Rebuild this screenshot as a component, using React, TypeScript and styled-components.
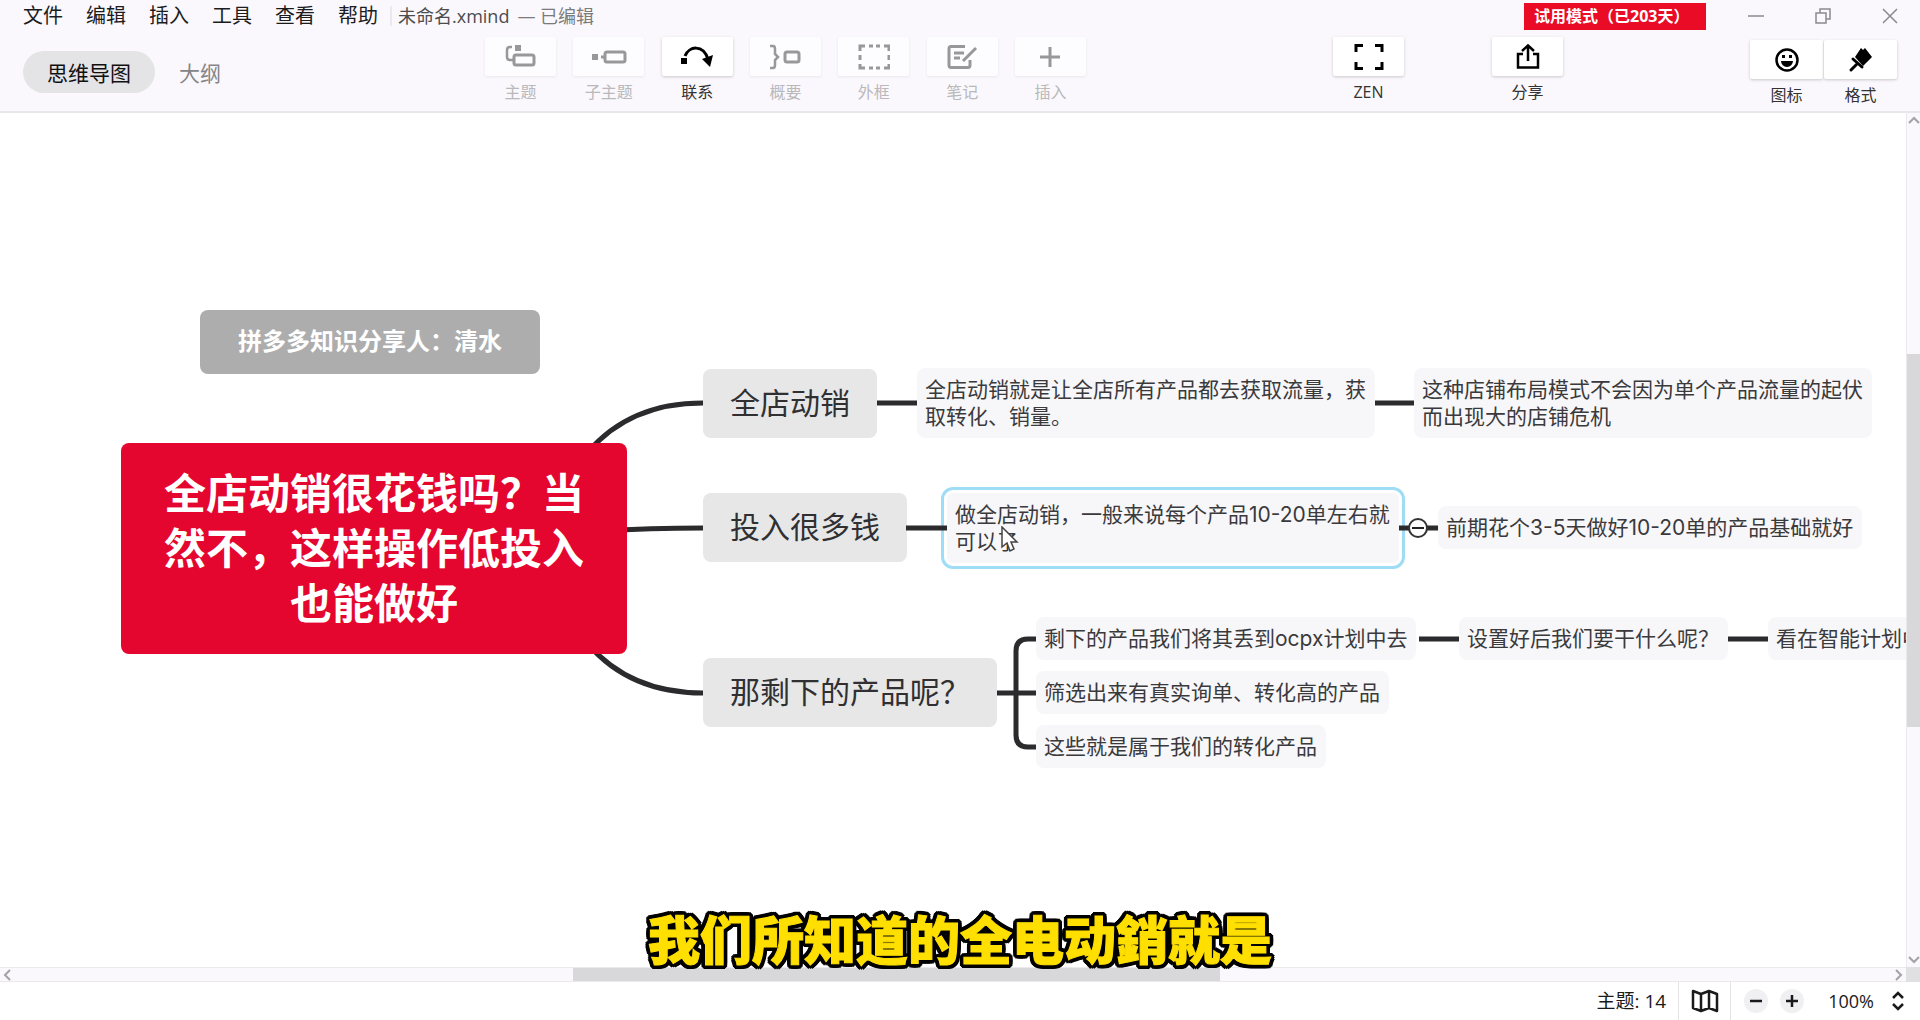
import React from "react";
import styled, { createGlobalStyle } from "styled-components";

const ui = `"Open Sans", "Noto Sans CJK SC", sans-serif`;
const mapFont = `Inter, "Noto Sans CJK SC", sans-serif`;

const GlobalStyle = createGlobalStyle`
  * { box-sizing: border-box; }
  body { margin: 0; background: #fff; font-family: ${ui}; color: #222; overflow: hidden; }
  button { font: inherit; color: inherit; border: 0; padding: 0; background: none; cursor: pointer; }
`;

const Window = styled.div`
  position: relative;
  height: 100vh;
  display: grid;
  grid-template-rows: auto 1fr auto;
`;

const Header = styled.header`
  background: #faf8fc;
  border-bottom: 2px solid #e8e6ea;
  height: 113px;
  display: grid;
  grid-template-rows: 32px 1fr;
`;

const TitleBar = styled.div`
  display: flex;
  align-items: center;
  padding: 0 22px 0 23px;
`;

const Menu = styled.nav`
  display: flex;
  gap: 23px;
  padding-right: 12px;
`;

const MenuItem = styled.button`
  font-size: 20px;
  line-height: 32px;
  color: #1c1c1e;
`;

const FileName = styled.span`
  border-left: 2px solid #ebe9ed;
  padding-left: 6px;
  font-size: 18px;
  line-height: 20px;
  color: #4c4c4e;
`;

const FileState = styled.span`
  padding-left: 8px;
  font-size: 18px;
  line-height: 20px;
  color: #7b7b7d;
`;

const TrialBadge = styled.span`
  margin-left: auto;
  margin-right: 42px;
  width: 182px;
  height: 27px;
  background: #ea0b27;
  color: #fff;
  font-size: 16px;
  font-weight: 700;
  line-height: 27px;
  padding-left: 10px;
  white-space: nowrap;
`;

const WindowControls = styled.div`
  display: flex;
  justify-content: space-between;
  width: 150px;
  color: #8a8a8c;
`;

const WindowButton = styled.button`
  display: flex;
  width: 16px;
  height: 16px;
`;

const ToolRow = styled.div`
  display: flex;
  align-items: flex-start;
  padding: 5px 23px 0;
`;

const ViewTabs = styled.div`
  display: flex;
  align-items: center;
  padding-top: 14px;
  width: 462px;
`;

const ViewTab = styled.button<{ $active?: boolean }>`
  height: 42px;
  padding: 0 24px;
  border-radius: 21px;
  font-size: 21px;
  background: ${(p) => (p.$active ? "#e4e3e6" : "transparent")};
  color: ${(p) => (p.$active ? "#111" : "#858587")};
`;

const Tools = styled.div`
  display: flex;
  justify-content: space-between;
  width: 601px;
`;

const ToolBox = styled.span<{ $disabled?: boolean }>`
  display: flex;
  align-items: center;
  justify-content: center;
  width: 71px;
  height: 39px;
  border-radius: 2px;
  background: ${(p) => (p.$disabled ? "#fdfcfe" : "#fff")};
  box-shadow: 0 1px 3px ${(p) => (p.$disabled ? "#e9e7eb" : "#c9c7cc")};
  color: ${(p) => (p.$disabled ? "#98989a" : "#000")};
`;

const Tool = styled.button<{ $disabled?: boolean }>`
  display: flex;
  flex-direction: column;
  align-items: center;
  gap: 5px;
  font-size: 16px;
  line-height: 22px;
  color: ${(p) => (p.$disabled ? "#b9b8bb" : "#333")};
`;

const Actions = styled.div`
  display: flex;
  margin-left: auto;
  gap: 88px;
`;

const Panels = styled.div`
  display: flex;
  margin-left: 187px;
  gap: 1px;
  padding-top: 3px;

  ${ToolBox} {
    width: 73px;
  }
`;

const Workspace = styled.main`
  display: grid;
  grid-template-columns: 1fr 14px;
  grid-template-rows: 1fr 15px;
  min-height: 0;
`;

const Canvas = styled.section`
  position: relative;
  overflow: hidden;
  background: #fff;
  font-family: ${mapFont};
`;

const Lines = styled.svg`
  position: absolute;
  left: 0;
  top: 0;
`;

const Topic = styled.div<{ $x: number; $y: number }>`
  position: absolute;
  left: ${(p) => p.$x}px;
  top: ${(p) => p.$y}px;
  border-radius: 8px;
  white-space: pre;
`;

const Central = styled(Topic)`
  padding: 23px 43px;
  background: #e4062e;
  color: #fff;
  font-size: 42px;
  font-weight: 700;
  line-height: 55px;
  text-align: center;
`;

const Floating = styled(Topic)`
  padding: 0 38px;
  background: #adadad;
  color: #fff;
  font-size: 24px;
  font-weight: 700;
  line-height: 64px;
`;

const Main = styled(Topic)`
  padding: 0 27px;
  background: #e7e7e8;
  color: #303032;
  font-size: 30px;
  line-height: 69px;
`;

const Sub = styled(Topic)<{ $selected?: boolean }>`
  padding: 8px 9px 8px 8px;
  background: #f7f6f9;
  color: #3a3a3c;
  font-size: 21px;
  line-height: 27px;
  ${(p) => p.$selected && "outline: 3px solid #9fdcf5; outline-offset: 3px; border-radius: 6px;"}
`;

const Collapse = styled.button`
  position: absolute;
  left: 1408px;
  top: 405px;
  width: 20px;
  height: 20px;
  border: 2px solid #333;
  border-radius: 50%;
  background: #fff;
  display: flex;
  align-items: center;
  justify-content: center;
`;

const Pointer = styled.svg`
  position: absolute;
  left: 1001px;
  top: 413px;
`;

const ScrollTrack = styled.div<{ $vertical?: boolean }>`
  display: flex;
  flex-direction: ${(p) => (p.$vertical ? "column" : "row")};
  align-items: center;
  justify-content: space-between;
  background: #faf8fc;
  color: #a3a2a6;
  border: 0 solid #ebe9ee;
  border-width: ${(p) => (p.$vertical ? "0 0 0 1px" : "1px 0")};
`;

const ScrollRail = styled.div<{ $vertical?: boolean }>`
  flex: 1;
  align-self: stretch;
  display: grid;
  ${(p) => (p.$vertical ? "grid-template-rows: 227fr 373fr 226fr;" : "grid-template-columns: 558fr 647fr 671fr;")}
`;

const ScrollThumb = styled.div<{ $vertical?: boolean }>`
  background: #d8d7da;
  ${(p) => (p.$vertical ? "grid-row: 2;" : "grid-column: 2;")}
`;

const Arrow = styled.button`
  display: flex;
  align-items: center;
  justify-content: center;
  width: 14px;
  height: 14px;
`;

const Corner = styled.div`
  background: #e0dfe2;
`;

const StatusBar = styled.footer`
  display: flex;
  justify-content: flex-end;
  height: 38px;
  padding-right: 15px;
  background: #fff;
  font-size: 18px;
  line-height: 38px;
  color: #1a1a1a;
`;

const TopicCount = styled.span`
  padding-right: 12px;
  font-size: 19px;
`;

const MapButton = styled.button`
  display: flex;
  align-items: center;
  justify-content: center;
  width: 53px;
  border: 1px solid #e4e3e6;
  border-width: 0 1px;
`;

const Zoom = styled.div`
  display: flex;
  align-items: center;
  gap: 12px;
  padding: 0 24px 0 13px;
`;

const ZoomButton = styled.button`
  display: flex;
  align-items: center;
  justify-content: center;
  width: 24px;
  height: 24px;
  border-radius: 50%;
  background: #f0eff2;
`;

const ZoomLevel = styled.button`
  display: flex;
  align-items: center;
  gap: 17px;
  font-size: 18px;
`;

const Caption = styled.p`
  position: absolute;
  left: 0;
  right: 0;
  bottom: 44px;
  margin: 0;
  text-align: center;
  font: 900 52px/76px "Noto Sans CJK SC", sans-serif;
  color: #ffdf00;
  -webkit-text-stroke: 1px #ffdf00;
  text-shadow: 4px 0 #000, -4px 0 #000, 0 4px #000, 0 -4px #000, 3px 3px #000, -3px 3px #000,
    3px -3px #000, -3px -3px #000, 4px 2px #000, -4px 2px #000, 4px -2px #000, -4px -2px #000,
    2px 4px #000, -2px 4px #000, 2px -4px #000, -2px -4px #000, 2px 0 #000, -2px 0 #000;
  pointer-events: none;
`;

type IconProps = { w?: number; h?: number; sw?: number; children: React.ReactNode };
const Icon = ({ w = 32, h = 28, sw = 3, children }: IconProps) => (
  <svg width={w} height={h} viewBox={`0 0 ${w} ${h}`} fill="none" stroke="currentColor" strokeWidth={sw} aria-hidden="true">
    {children}
  </svg>
);

const tools = [
  {
    label: "主题",
    icon: <><path d="M7 4H5Q2 4 2 7V14Q2 17 5 17H8" strokeWidth="2.5" /><rect x="9" y="12" width="20" height="10" rx="2" /><path d="M10 2h6v6h-6z" fill="currentColor" stroke="none" /></>,
  },
  {
    label: "子主题",
    icon: <><path d="M1 11h6v6H1z" fill="currentColor" stroke="none" /><path d="M10 14h4" /><rect x="14" y="9" width="20" height="10" rx="2" /></>,
    w: 36,
  },
  {
    label: "联系",
    on: true,
    icon: <><path d="M0 15h6v6H0z" fill="currentColor" stroke="none" /><path d="M4 13C8 3 22 1 27 16" /><path d="M21 16l11-4-3 12z" fill="currentColor" stroke="none" /></>,
  },
  {
    label: "概要",
    icon: <><path d="M1 3H4Q6 3 6 6V11L9 14L6 17V22Q6 25 4 25H1" strokeWidth="2.5" /><rect x="16" y="9" width="14" height="10" rx="2" /></>,
  },
  {
    label: "外框",
    icon: <path d="M2 8V3H7M11 3h4M18 3h4M26 3h5V8M31 12v5M31 21v4H26M22 25h-4M15 25h-4M7 25H2V21M2 17v-5" />,
  },
  {
    label: "笔记",
    icon: <><path d="M19 3.5H5Q3 3.5 3 6V22Q3 24.5 5 24.5H22Q24 24.5 24 22V17" /><path d="M8 10h10M8 15h6M17 18L30 5" /></>,
  },
  { label: "插入", icon: <path d="M16 4V24M6 14H26" /> },
];

const topics = [
  { x: 917, y: 255, text: "全店动销就是让全店所有产品都去获取流量，获\n取转化、销量。" },
  { x: 1414, y: 255, text: "这种店铺布局模式不会因为单个产品流量的起伏\n而出现大的店铺危机" },
  { x: 947, y: 380, text: "做全店动销，一般来说每个产品10-20单左右就\n可以了", selected: true },
  { x: 1438, y: 393, text: "前期花个3-5天做好10-20单的产品基础就好" },
  { x: 1036, y: 504, text: "剩下的产品我们将其丢到ocpx计划中去" },
  { x: 1459, y: 504, text: "设置好后我们要干什么呢？" },
  { x: 1768, y: 504, text: "看在智能计划中" },
  { x: 1036, y: 558, text: "筛选出来有真实询单、转化高的产品" },
  { x: 1036, y: 612, text: "这些就是属于我们的转化产品" },
];

const Chevron = ({ d }: { d: string }) => <Icon w={12} h={12} sw={2}><path d={d} /></Icon>;

export default function App() {
  return (
    <Window>
      <GlobalStyle />
      <Header>
        <TitleBar>
          <Menu>
            {["文件", "编辑", "插入", "工具", "查看", "帮助"].map((m) => <MenuItem key={m}>{m}</MenuItem>)}
          </Menu>
          <FileName>未命名.xmind</FileName>
          <FileState>— 已编辑</FileState>
          <TrialBadge>试用模式（已203天）</TrialBadge>
          <WindowControls>
            <WindowButton aria-label="最小化"><Icon w={16} h={16} sw={1.5}><path d="M0 8h16" /></Icon></WindowButton>
            <WindowButton aria-label="还原"><Icon w={16} h={16} sw={1.5}><path d="M1 5h10v10H1zM5 5V1h10v10h-4" /></Icon></WindowButton>
            <WindowButton aria-label="关闭"><Icon w={16} h={16} sw={1.5}><path d="M1 1l14 14M15 1L1 15" /></Icon></WindowButton>
          </WindowControls>
        </TitleBar>
        <ToolRow>
          <ViewTabs>
            <ViewTab $active>思维导图</ViewTab>
            <ViewTab>大纲</ViewTab>
          </ViewTabs>
          <Tools>
            {tools.map((t) => (
              <Tool key={t.label} $disabled={!t.on}>
                <ToolBox $disabled={!t.on}><Icon w={t.w}>{t.icon}</Icon></ToolBox>
                {t.label}
              </Tool>
            ))}
          </Tools>
          <Actions>
            <Tool>
              <ToolBox><Icon><path d="M3 9V2.5H10M22 2.5H29V9M29 19V25.5H22M10 25.5H3V19" /></Icon></ToolBox>
              ZEN
            </Tool>
            <Tool>
              <ToolBox><Icon w={28}><path d="M9 11H4V24.500H24V11H19M14 18V3M8 8L14 2.500L20 8" strokeWidth="2.5" /></Icon></ToolBox>
              分享
            </Tool>
          </Actions>
          <Panels>
            <Tool>
              <ToolBox>
                <Icon w={26}>
                  <circle cx="13" cy="14" r="10.5" strokeWidth="2.5" />
                  <path d="M7 15h12a6 6 0 0 1-12 0zM8 9h3v3H8zM15 9h3v3h-3z" fill="currentColor" stroke="none" />
                </Icon>
              </ToolBox>
              图标
            </Tool>
            <Tool>
              <ToolBox>
                <Icon w={26}>
                  <path d="M13 2L15 4L17 2L24 11L15 20L7 11z" fill="currentColor" stroke="none" />
                  <path d="M5 13L14 21M9 18L3 24" strokeLinecap="round" />
                </Icon>
              </ToolBox>
              格式
            </Tool>
          </Panels>
        </ToolRow>
      </Header>

      <Workspace>
        <Canvas>
          <Lines width="1906" height="854" fill="none" stroke="#2b2b2d" strokeWidth="5">
            <path d="M588 339Q630 290 703 290" />
            <path d="M600 418Q650 415 703 415" />
            <path d="M588 531Q630 580 703 580" />
            <path d="M877 290H917M1374 290H1414M1419 526H1459M1727 526H1768" />
            <path d="M997 580H1036M1036 526H1028Q1016 526 1016 538V622Q1016 634 1028 634H1036" />
          </Lines>
          <Floating $x={200} $y={197}>拼多多知识分享人：清水</Floating>
          <Central $x={121} $y={330}>{"全店动销很花钱吗？当\n然不，这样操作低投入\n也能做好"}</Central>
          <Main $x={703} $y={256}>全店动销</Main>
          <Main $x={703} $y={380}>投入很多钱</Main>
          <Main $x={703} $y={545}>那剩下的产品呢？</Main>
          {topics.map((t) => <Sub key={t.text} $x={t.x} $y={t.y} $selected={t.selected}>{t.text}</Sub>)}
          <Lines width="1906" height="854" stroke="#2b2b2d" strokeWidth="5">
            <path d="M906 415H947M1399 415H1438" />
          </Lines>
          <Collapse aria-label="折叠"><Icon w={12} h={12} sw={2}><path d="M0 6h12" /></Icon></Collapse>
          <Pointer width="18" height="27" viewBox="0 0 18 27">
            <path d="M1 1V21L6 17L9 25L13 23L10 16H16Z" fill="#fff" stroke="#444" strokeWidth="1.5" />
          </Pointer>
        </Canvas>
        <ScrollTrack $vertical>
          <Arrow aria-label="向上"><Chevron d="M1 9l5-5 5 5" /></Arrow>
          <ScrollRail $vertical><ScrollThumb $vertical /></ScrollRail>
          <Arrow aria-label="向下"><Chevron d="M1 3l5 5 5-5" /></Arrow>
        </ScrollTrack>
        <ScrollTrack>
          <Arrow aria-label="向左"><Chevron d="M9 1L4 6l5 5" /></Arrow>
          <ScrollRail><ScrollThumb /></ScrollRail>
          <Arrow aria-label="向右"><Chevron d="M3 1l5 5-5 5" /></Arrow>
        </ScrollTrack>
        <Corner />
      </Workspace>

      <StatusBar>
        <TopicCount>主题: 14</TopicCount>
        <MapButton aria-label="导航图">
          <Icon w={28} h={24} sw={2.5}><path d="M2 2L10 5L18 2L26 5V22L18 19L10 22L2 19ZM10 5V22M18 2V19" strokeLinejoin="round" /></Icon>
        </MapButton>
        <Zoom>
          <ZoomButton aria-label="缩小"><Icon w={12} h={12} sw={2.5}><path d="M0 6h12" /></Icon></ZoomButton>
          <ZoomButton aria-label="放大"><Icon w={12} h={12} sw={2.5}><path d="M0 6h12M6 0v12" /></Icon></ZoomButton>
        </Zoom>
        <ZoomLevel>100%<Icon w={14} h={20} sw={2.5}><path d="M2 7l5-5 5 5M2 13l5 5 5-5" /></Icon></ZoomLevel>
      </StatusBar>
      <Caption>我们所知道的全电动銷就是</Caption>
    </Window>
  );
}
